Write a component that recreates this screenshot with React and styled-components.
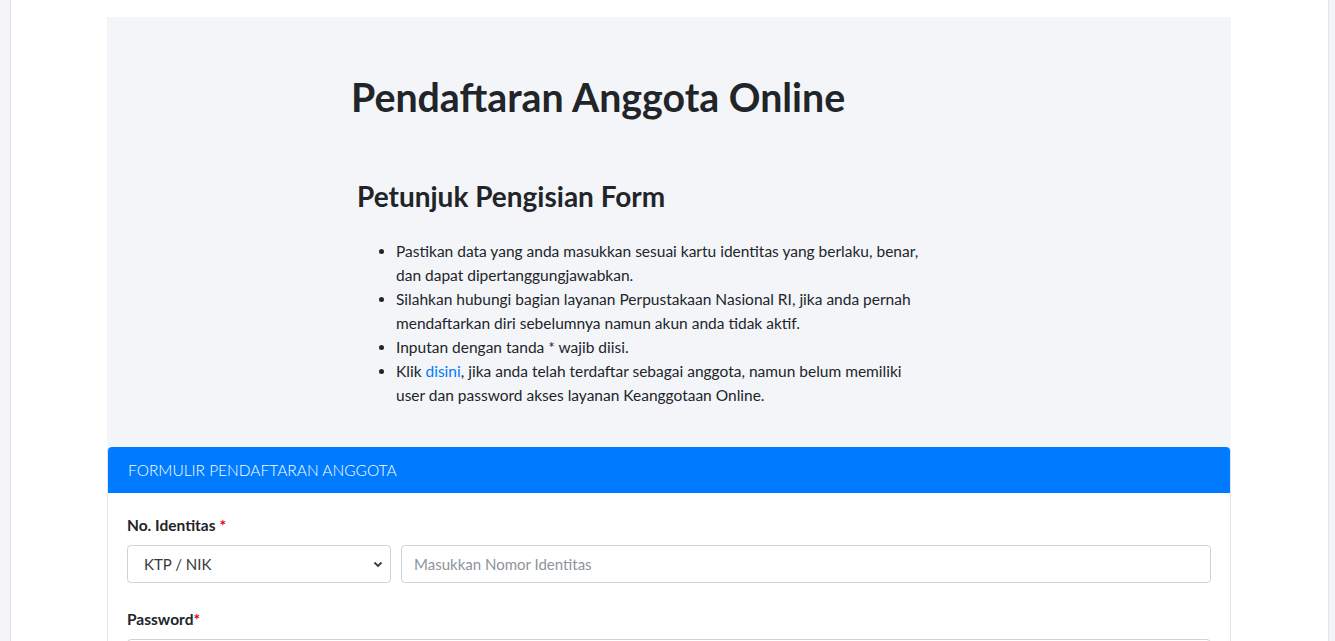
import React from 'react';
import styled, { createGlobalStyle } from 'styled-components';

const GlobalStyle = createGlobalStyle`
  body {
    margin: 0;
    background: #f4f5f8;
    font-family: Lato, "Open Sans", sans-serif;
    color: #212529;
  }
`;

const Page = styled.div`
  margin: 0 6px 0 10px;
  min-height: 641px;
  background: #fff;
  border-left: 1px solid #e2e4e9;
  border-right: 1px solid #e2e4e9;
  padding-top: 17px;
`;

const Container = styled.div`
  width: 1124px;
  margin-left: 96px;
`;

const Jumbotron = styled.section`
  background: #f4f5f9;
  padding: 56px 0 40px 244px;
`;

const Title = styled.h1`
  margin: 0 0 60px;
  font-size: 39.3px;
  font-weight: 700;
  line-height: 1.2;
`;

const Subtitle = styled.h3`
  margin: 0 0 25px 6px;
  font-size: 28px;
  font-weight: 700;
  line-height: 1.2;
`;

const Guide = styled.ul`
  margin: 0;
  padding-left: 45px;
  width: 532px;
  font-size: 15.5px;
  line-height: 24px;
`;

const Link = styled.a`
  color: #007bff;
  text-decoration: none;
`;

const Card = styled.section`
  border: 1px solid #dfe2e6;
  border-top: none;
  border-radius: 4px 4px 0 0;
  background: #fff;
`;

const CardHeader = styled.header`
  background: #007bff;
  color: #fff;
  height: 46px;
  display: flex;
  align-items: center;
  padding: 0 20px;
  border-radius: 4px 4px 0 0;
  font-size: 15.5px;
  font-weight: 300;
`;

const CardBody = styled.div`
  padding: 23px 19px 0 19px;
`;

const Field = styled.div`
  margin-bottom: 27px;
`;

const Label = styled.label`
  display: block;
  font-size: 15.5px;
  font-weight: 700;
  margin-bottom: 11px;
`;

const Req = styled.span`
  color: #e3000f;
  margin-left: ${p => (p.tight ? '0' : '4px')};
`;

const Row = styled.div`
  display: flex;
  gap: 10px;
`;

const SelectBox = styled.div`
  width: 264px;
  height: 38px;
  box-sizing: border-box;
  border: 1px solid #ced4da;
  border-radius: 4px;
  display: flex;
  align-items: center;
  justify-content: space-between;
  padding: 0 7px 0 16px;
  font-size: 15px;
  color: #343a40;
  flex-shrink: 0;
`;

const Input = styled.input`
  flex: 1;
  height: 38px;
  box-sizing: border-box;
  border: 1px solid #ced4da;
  border-radius: 4px;
  padding: 0 12px;
  font-family: inherit;
  font-size: 15px;
  color: #495057;
  &::placeholder {
    color: #8d949b;
  }
`;

const App = () => (
  <>
    <GlobalStyle />
    <Page>
      <Container>
        <Jumbotron>
          <Title>Pendaftaran Anggota Online</Title>
          <Subtitle>Petunjuk Pengisian Form</Subtitle>
          <Guide>
            <li>Pastikan data yang anda masukkan sesuai kartu identitas yang berlaku, benar, dan dapat dipertanggungjawabkan.</li>
            <li>Silahkan hubungi bagian layanan Perpustakaan Nasional RI, jika anda pernah mendaftarkan diri sebelumnya namun akun anda tidak aktif.</li>
            <li>Inputan dengan tanda * wajib diisi.</li>
            <li>Klik <Link href="#">disini</Link>, jika anda telah terdaftar sebagai anggota, namun belum memiliki user dan password akses layanan Keanggotaan Online.</li>
          </Guide>
        </Jumbotron>
        <Card>
          <CardHeader>FORMULIR PENDAFTARAN ANGGOTA</CardHeader>
          <CardBody>
            <Field>
              <Label>No. Identitas<Req>*</Req></Label>
              <Row>
                <SelectBox>
                  KTP / NIK
                  <svg width="10" height="10" viewBox="0 0 10 10">
                    <path d="M1.5 3.5 L5 7 L8.5 3.5" fill="none" stroke="#343a40" strokeWidth="1.8" />
                  </svg>
                </SelectBox>
                <Input placeholder="Masukkan Nomor Identitas" />
              </Row>
            </Field>
            <Field>
              <Label>Password<Req tight>*</Req></Label>
              <Row>
                <Input type="password" />
              </Row>
            </Field>
          </CardBody>
        </Card>
      </Container>
    </Page>
  </>
);

export default App;
